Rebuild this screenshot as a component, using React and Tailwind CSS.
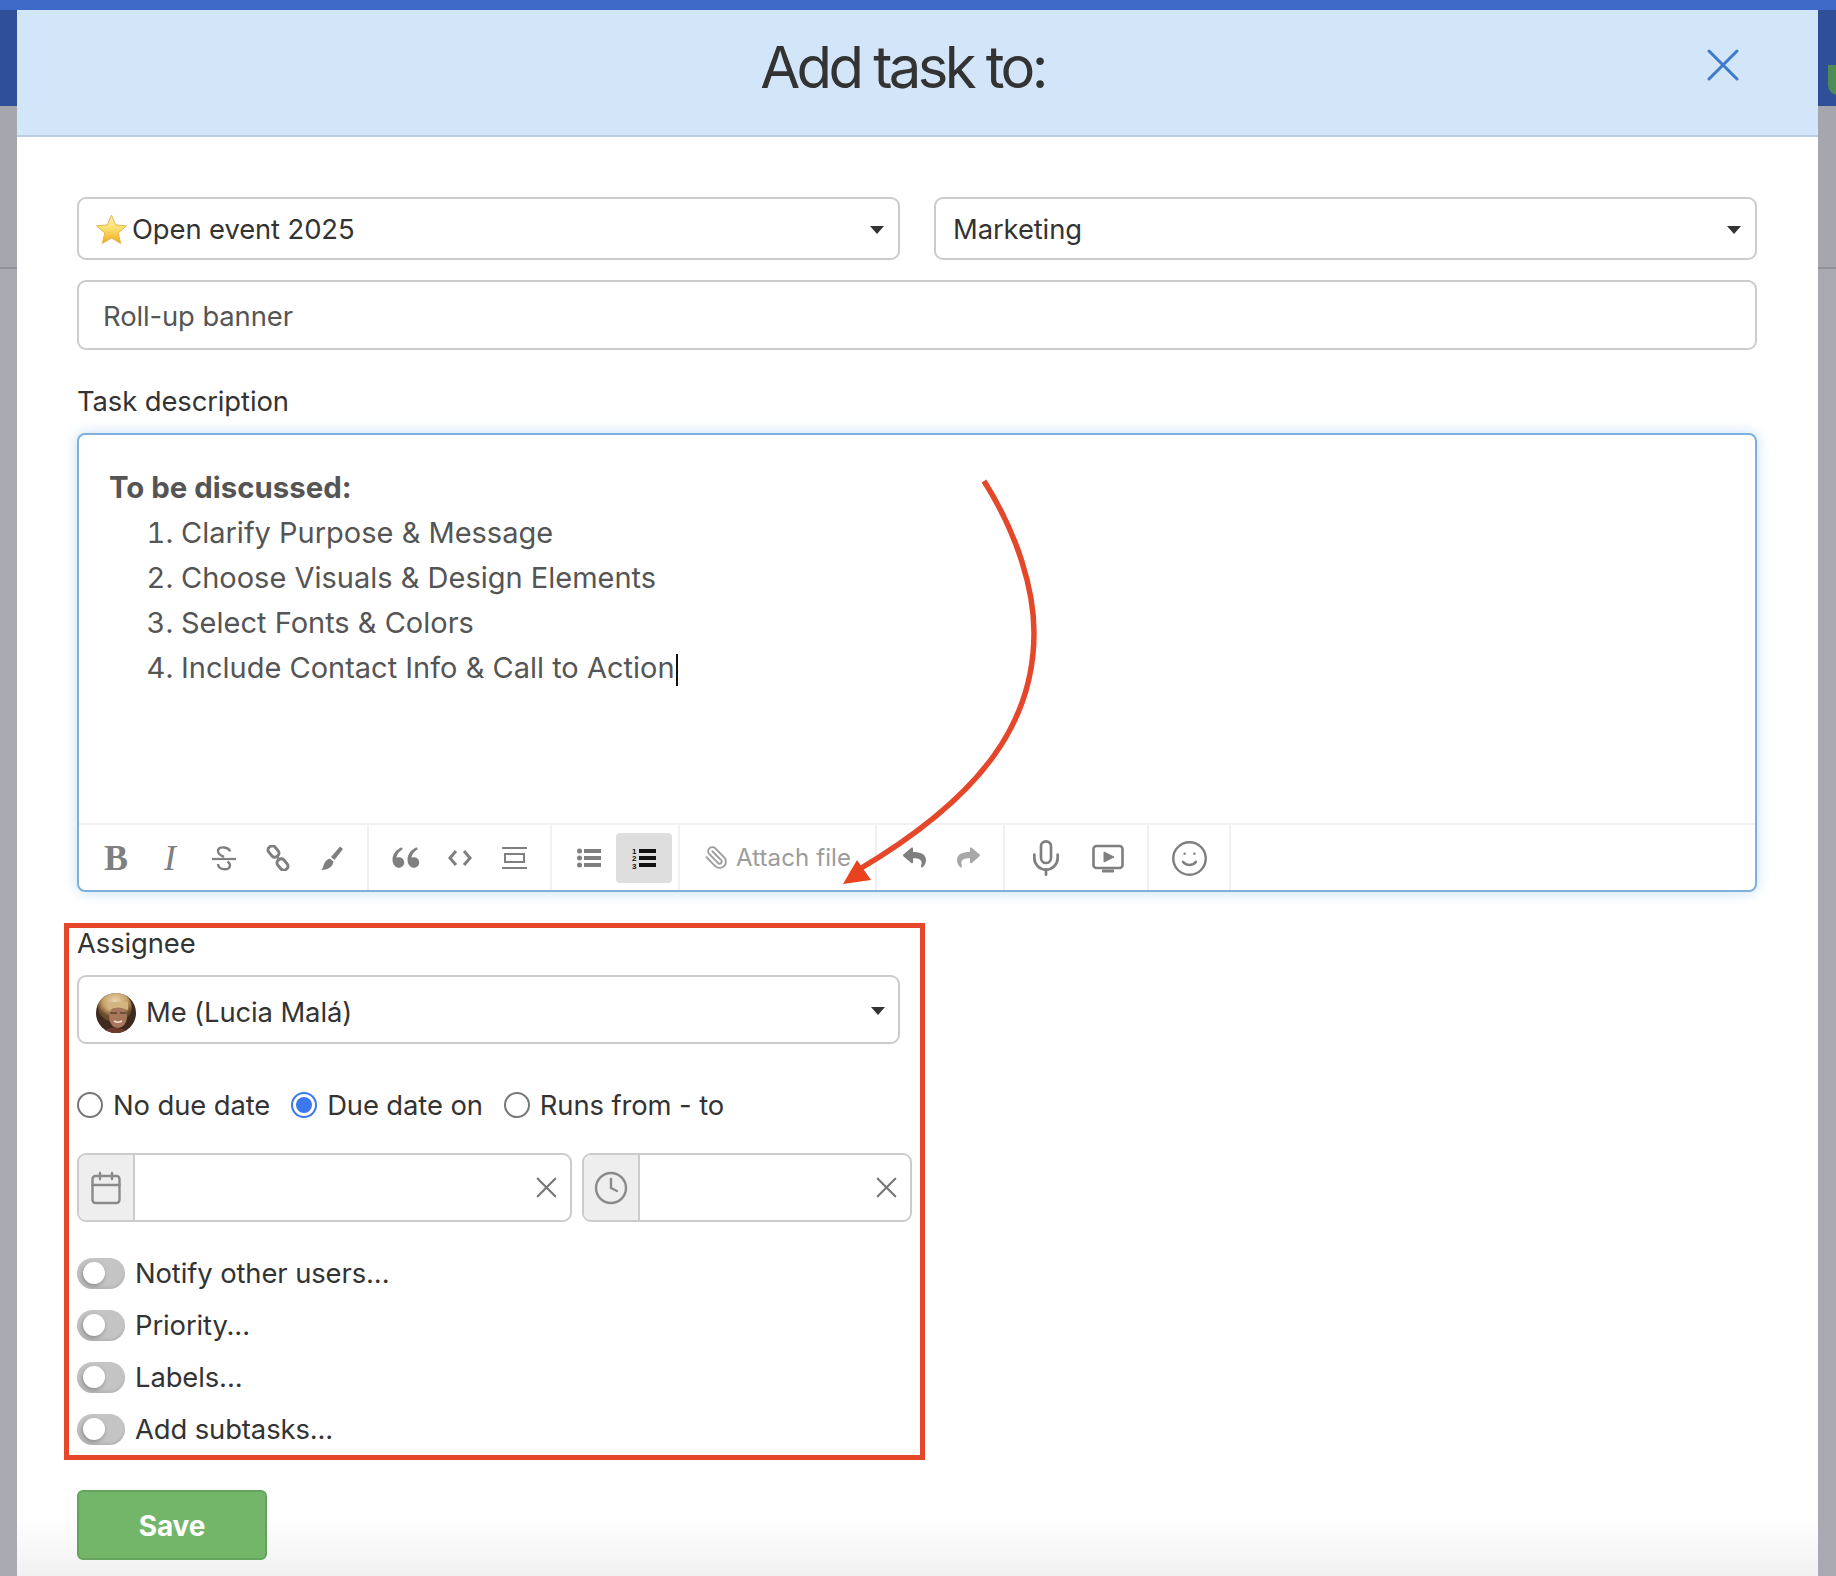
import { Calendar, Clock, Mic, Paperclip, Smile, X } from 'lucide-react';
import { FaReply, FaShare } from 'react-icons/fa';
import { RiDoubleQuotesL } from 'react-icons/ri';

function Caret() {
  return (
    <svg width="14" height="8" viewBox="0 0 14 8" className="mt-[2px] shrink-0">
      <path d="M0 0h14L7 8z" fill="#333" />
    </svg>
  );
}

function Star() {
  return (
    <svg width="31" height="31" viewBox="0 0 30 30" className="shrink-0">
      <defs>
        <linearGradient id="star" x1="0" y1="0" x2="0" y2="1">
          <stop offset="0" stopColor="#fdf2b0" />
          <stop offset="0.5" stopColor="#fbdd6a" />
          <stop offset="1" stopColor="#f3a81c" />
        </linearGradient>
      </defs>
      <path d="M15 1l4 9.500 10.500 1-8 6.800 2.400 10.200L15 23.200l-8.900 5.300 2.400-10.200-8-6.800 10.500-1z" fill="url(#star)" stroke="#e3b04a" strokeWidth="0.9" />
    </svg>
  );
}

function Avatar() {
  return (
    <svg width="40" height="40" viewBox="0 0 40 40" className="shrink-0">
      <defs>
        <radialGradient id="hair" cx="0.5" cy="0.3" r="0.55">
          <stop offset="0" stopColor="#ead7ad" />
          <stop offset="0.65" stopColor="#c6a069" />
          <stop offset="1" stopColor="#6b4a2c" />
        </radialGradient>
        <clipPath id="av">
          <circle cx="20" cy="20" r="20" />
        </clipPath>
      </defs>
      <g clipPath="url(#av)">
        <rect width="40" height="40" fill="#3f2a1e" />
        <ellipse cx="19" cy="14" rx="17" ry="15" fill="url(#hair)" />
        <ellipse cx="22" cy="24" rx="9" ry="11" fill="#a6775a" />
        <path d="M12 17q10-5 20 0v-8H12z" fill="#d3b582" />
        <path d="M14 20h7M24 20h6" stroke="#5f4334" strokeWidth="1.600" />
        <path d="M18 28q4 2.500 8 0" stroke="#ecdccb" strokeWidth="1.500" fill="none" />
        <path d="M6 40q6-6 15-5t13 5z" fill="#6e3a2b" />
      </g>
    </svg>
  );
}

function Select({ children }) {
  return (
    <div className="flex h-[63px] items-center justify-between rounded-[9px] border-2 border-[#cccccc] bg-white pl-[17px] pr-[14px]">
      <div className="flex items-center gap-[5px] pt-[2px]">{children}</div>
      <Caret />
    </div>
  );
}

function Radio({ checked, label }) {
  return (
    <label className="flex items-center gap-[10px]">
      {checked ? (
        <span className="flex h-[26px] w-[26px] items-center justify-center rounded-full border-2 border-[#3b78ee] bg-white">
          <span className="h-[16px] w-[16px] rounded-full bg-[#3b78ee]" />
        </span>
      ) : (
        <span className="h-[26px] w-[26px] rounded-full border-2 border-[#777777] bg-white" />
      )}
      <span className="pt-px">{label}</span>
    </label>
  );
}

function Toggle({ label }) {
  return (
    <div className="flex h-[32px] items-center gap-[10px]">
      <span className="flex h-[31px] w-[48px] items-center rounded-full bg-[#c4c4c4] pl-[6px] shadow-[inset_0_-2px_3px_rgba(0,0,0,0.08)]">
        <span className="h-[22px] w-[22px] rounded-full bg-white shadow-[-1px_2px_4px_rgba(0,0,0,0.3)]" />
      </span>
      <span className="pt-px">{label}</span>
    </div>
  );
}

function DateField({ icon, className }) {
  return (
    <div className={`flex h-[69px] items-center rounded-[9px] border-2 border-[#cccccc] bg-white ${className}`}>
      <div className="flex h-full w-[56px] shrink-0 items-center justify-center rounded-l-[8px] border-r-2 border-[#cccccc] bg-[#eeeeee] text-[#8a8a8a]">
        {icon}
      </div>
      <div className="flex-1" />
      <X size={35} strokeWidth={1.5} className="mr-[6px] text-[#777777]" />
    </div>
  );
}

function Btn({ children, active, className = 'w-[54px]' }) {
  return (
    <div className={`flex h-[50px] shrink-0 items-center justify-center rounded-[4px] ${active ? 'bg-[#dedede]' : ''} ${className}`}>
      {children}
    </div>
  );
}

function Group({ children, className }) {
  return (
    <div className={`flex h-full shrink-0 items-center border-r-2 border-[#f1f1f1] ${className}`}>{children}</div>
  );
}

const ICON = '#7f7f7f';

function Toolbar() {
  return (
    <div className="flex h-[67px] border-t-2 border-[#f1f1f1] text-[#7f7f7f]">
      <Group className="w-[290px] pl-[10px]">
        <Btn><span className="font-['Liberation_Serif',serif] text-[36px] font-bold leading-none">B</span></Btn>
        <Btn><span className="font-['Liberation_Serif',serif] text-[36px] italic leading-none">I</span></Btn>
        <Btn>
          <svg width="24" height="28" viewBox="0 0 24 28" fill="none" stroke={ICON}>
            <path d="M18 7.500C17 3 7 1.500 6 6.500c-.6 3.500 3 5 6 6.500" strokeWidth="2.400" />
            <path d="M6 20c.5 6.500 12 7 12 1.500 0-2-1-3-2.500-4" strokeWidth="2.400" />
            <path d="M0 15h24" strokeWidth="2.200" />
          </svg>
        </Btn>
        <Btn>
          <svg width="24" height="26" viewBox="0 0 24 26" fill="none" stroke={ICON} strokeWidth="3">
            <rect x="1.500" y="2.500" width="12" height="8" rx="3.500" transform="rotate(50 7.500 6.500)" />
            <rect x="10.500" y="15.500" width="12" height="8" rx="3.500" transform="rotate(50 16.500 19.500)" />
            <path d="M10 11l4 4" strokeWidth="2" />
          </svg>
        </Btn>
        <Btn>
          <svg width="24" height="26" viewBox="0 0 24 26" fill={ICON}>
            <path d="M20 1.500l3 2.500-8.500 11-3.500-3z" />
            <path d="M10 13.500l3.500 3c-.5 5-5.500 8.500-12.500 8.500 2.500-2 2-4 3.500-7 1.300-2.500 3.500-4 5.500-4.500z" />
          </svg>
        </Btn>
      </Group>
      <Group className="w-[183px] pl-[10px]">
        <Btn><RiDoubleQuotesL size={36} /></Btn>
        <Btn>
          <svg width="24" height="18" viewBox="0 0 24 18" fill="none" stroke={ICON} strokeWidth="3">
            <path d="M8 2L2 9l6 7M16 2l6 7-6 7" />
          </svg>
        </Btn>
        <Btn>
          <svg width="25" height="24" viewBox="0 0 25 24" fill="none" stroke={ICON} strokeWidth="2">
            <path d="M0 2h25M0 22h25" />
            <rect x="3" y="8" width="19" height="8" />
          </svg>
        </Btn>
      </Group>
      <Group className="w-[128px] pl-[10px]">
        <Btn>
          <svg width="24" height="20" viewBox="0 0 24 20" fill={ICON}>
            <circle cx="2.500" cy="3" r="2.500" />
            <circle cx="2.500" cy="10" r="2.500" />
            <circle cx="2.500" cy="17" r="2.500" />
            <rect x="7" y="1" width="17" height="4" />
            <rect x="7" y="8" width="17" height="4" />
            <rect x="7" y="15" width="17" height="4" />
          </svg>
        </Btn>
        <Btn active className="w-[56px]">
          <svg width="24" height="22" viewBox="0 0 24 22" fill="#111111">
            <text x="0" y="7" fontSize="8" fontWeight="700" fontFamily="Liberation Sans, sans-serif">1</text>
            <text x="0" y="14" fontSize="8" fontWeight="700" fontFamily="Liberation Sans, sans-serif">2</text>
            <text x="0" y="21.500" fontSize="8" fontWeight="700" fontFamily="Liberation Sans, sans-serif">3</text>
            <rect x="7" y="2" width="17" height="4" />
            <rect x="7" y="9" width="17" height="4" />
            <rect x="7" y="16" width="17" height="4" />
          </svg>
        </Btn>
      </Group>
      <Group className="w-[197px] gap-[7px] pl-[24px] text-[#9c9c9c]">
        <Paperclip size={25} strokeWidth={1.8} className="shrink-0 -scale-x-100" />
        <span className="text-[24px] tracking-[0.1px]">Attach file</span>
      </Group>
      <Group className="w-[128px] pl-[10px]">
        <Btn><FaReply size={23} /></Btn>
        <Btn><FaShare size={23} className="text-[#a8a8a8]" /></Btn>
      </Group>
      <Group className="w-[144px] pl-[10px]">
        <Btn className="w-[62px]"><Mic size={40} strokeWidth={1.6} /></Btn>
        <Btn className="w-[62px]">
          <svg width="32" height="30" viewBox="0 0 32 30" fill="none" stroke={ICON} className="mt-[2px]">
            <rect x="1.500" y="2" width="29" height="22" rx="3" strokeWidth="2.600" />
            <path d="M12 8l10 5-10 5z" fill={ICON} strokeWidth="1" />
            <path d="M10 27h12" strokeWidth="3" />
          </svg>
        </Btn>
      </Group>
      <Group className="w-[82px] justify-center">
        <Smile size={39} strokeWidth={1.5} className="mt-[2px]" />
      </Group>
    </div>
  );
}

export default function App() {
  return (
    <div className="relative flex h-[1576px] w-[1836px] flex-col overflow-hidden bg-[#a8a9b1] font-['Inter',sans-serif] text-[27.4px] tracking-[-0.1px] text-[#333333]">
      <div className="h-[10px] shrink-0 bg-[#3f6ac8]" />
      <div className="flex flex-1">
        {/* dimmed page behind the dialog */}
        <div className="w-[17px] shrink-0">
          <div className="h-[96px] bg-[#2f4f98]" />
          <div className="h-[161px] bg-[#a6a7ae]" />
          <div className="h-[2px] bg-[#909197]" />
        </div>

        <div className="flex w-[1801px] flex-col bg-white">
          <div className="relative flex h-[127px] shrink-0 items-center justify-center border-b-2 border-[#bccde2] bg-[#d2e5f9] pb-[10px] pr-[30px]">
            <h1 className="text-[58px] font-normal tracking-[-3.6px] text-[#333333]">Add task to:</h1>
            <X size={56} strokeWidth={1.3} className="absolute right-[67px] top-[27px] text-[#3d7ac9]" />
          </div>

          <div className="flex flex-col pl-[60px] pr-[61px] pt-[60px]">
            <div className="grid grid-cols-2 gap-[34px]">
              <Select>
                <Star />
                <span>Open event 2025</span>
              </Select>
              <Select>
                <span>Marketing</span>
              </Select>
            </div>
            <div className="mt-[20px] flex h-[70px] items-center rounded-[9px] border-2 border-[#cccccc] pl-[24px] pt-[3px] text-[#555555]">
              Roll-up banner
            </div>

            <div className="mt-[35px] leading-[33px]">Task description</div>
            <div className="mt-[15px] flex h-[459px] flex-col rounded-[8px] border-[2.5px] border-[#7fb0dc] bg-white shadow-[0_0_14px_rgba(110,170,235,0.4)]">
              <div className="flex-1 pl-[30px] pt-[30px] text-[29px] tracking-[0px] text-[#555555]">
                <div className="text-[29.4px] font-bold leading-[45px]">To be discussed:</div>
                <ol className="list-decimal pl-[72px] leading-[45px]">
                  <li>Clarify Purpose &amp; Message</li>
                  <li>Choose Visuals &amp; Design Elements</li>
                  <li>Select Fonts &amp; Colors</li>
                  <li>
                    Include Contact Info &amp; Call to Action
                    <span className="ml-px inline-block h-[32px] w-[2px] bg-[#111111] align-middle" />
                  </li>
                </ol>
              </div>
              <Toolbar />
            </div>

            <div className="mt-[35px] leading-[33px]">Assignee</div>
            <div className="mt-[15px] flex h-[69px] w-[823px] items-center justify-between rounded-[9px] border-2 border-[#cccccc] pl-[17px] pr-[13px]">
              <div className="flex items-center gap-[10px] pt-[7px]">
                <Avatar />
                <span>Me (Lucia Malá)</span>
              </div>
              <Caret />
            </div>

            <div className="mt-[44px] flex h-[34px] items-center gap-[21px]">
              <Radio label="No due date" />
              <Radio checked label="Due date on" />
              <Radio label="Runs from - to" />
            </div>

            <div className="mt-[31px] flex gap-[10px]">
              <DateField className="w-[495px]" icon={<Calendar size={36} strokeWidth={1.6} />} />
              <DateField className="w-[330px]" icon={<Clock size={36} strokeWidth={1.6} />} />
            </div>

            <div className="mt-[35px] flex flex-col gap-[20px]">
              <Toggle label="Notify other users..." />
              <Toggle label="Priority..." />
              <Toggle label="Labels..." />
              <Toggle label="Add subtasks..." />
            </div>
          </div>

          <div className="flex-1 bg-gradient-to-b from-white from-55% to-[#f1f1f1] px-[60px] pt-[45px]">
            <button className="h-[70px] w-[190px] rounded-[6px] border-2 border-[#64a35c] bg-[#73b66a] pt-px text-[28px] font-bold text-white">
              Save
            </button>
          </div>
        </div>

        <div className="relative w-[18px] shrink-0 overflow-hidden">
          <div className="h-[96px] bg-[#2f4f98]" />
          <div className="h-[161px] bg-[#a6a7ae]" />
          <div className="h-[2px] bg-[#909197]" />
          <div className="absolute left-[10px] top-[55px] h-[30px] w-[20px] rounded-b-[10px] bg-[#4f8b55]" />
        </div>
      </div>

      {/* annotation drawn on top of the screenshot */}
      <div className="pointer-events-none absolute left-[64px] top-[923px] h-[537px] w-[861px] border-[5px] border-[#e5472b]" />
      <svg className="pointer-events-none absolute left-0 top-0" width="1836" height="1576" fill="none">
        <path d="M984 481C1018 535 1034 590 1034 633C1034 720 985 795 858 870" stroke="#e5472b" strokeWidth="5.500" />
        <path d="M843 884L857 860L871 880Z" fill="#e8421f" />
      </svg>
    </div>
  );
}
